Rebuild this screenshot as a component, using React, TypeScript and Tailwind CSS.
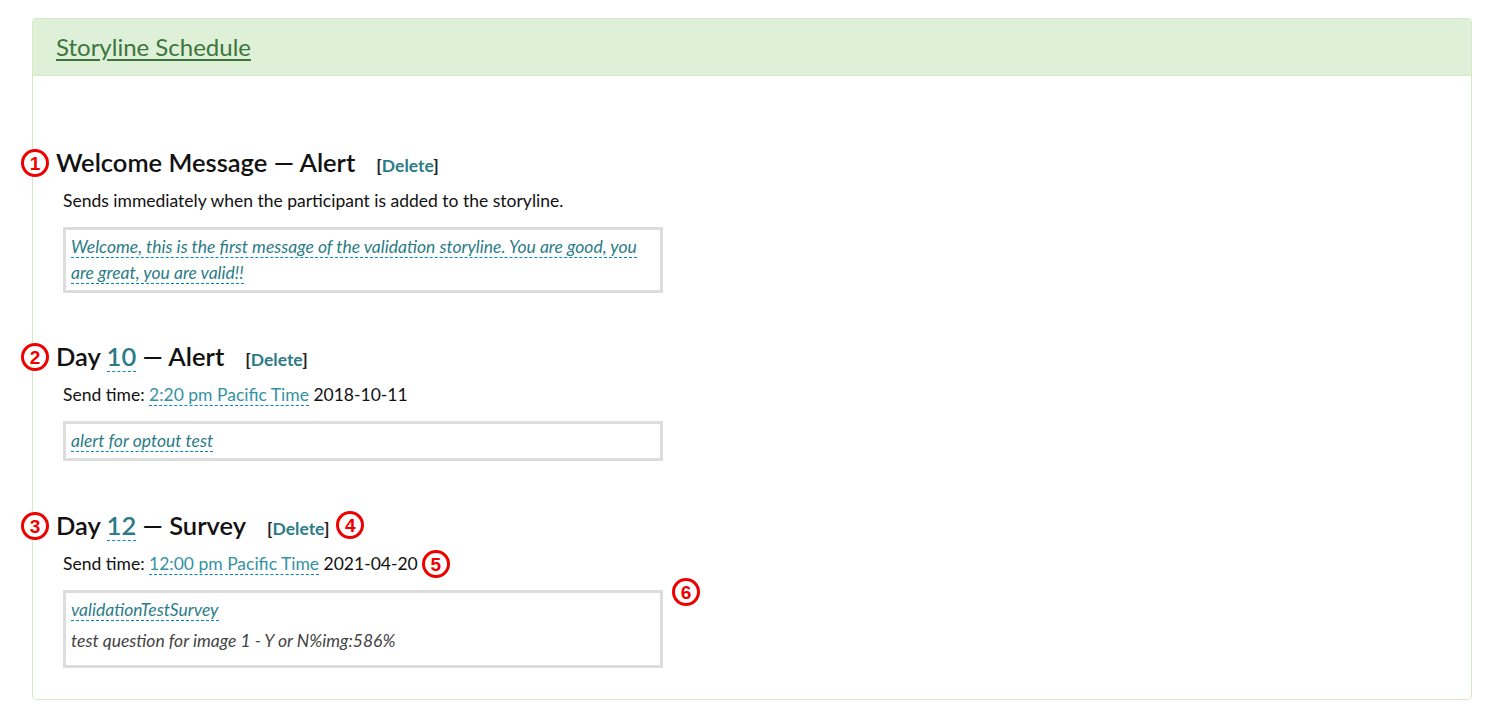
import React from 'react';

const teal = 'text-[#2c7c87]';

function Marker({ n, className = '' }: { n: number; className?: string }) {
  return (
    <span
      className={`inline-flex items-center justify-center w-[28px] h-[28px] rounded-full border-[3px] border-[#ee0000] bg-white text-[#ee0000] text-[19px] font-bold leading-none ${className}`}
      style={{ fontFamily: '"Liberation Sans", Arial, sans-serif' }}
    >
      {n}
    </span>
  );
}

function DeleteLink() {
  return (
    <span className="ml-[21px] text-[17.5px] font-bold text-[#222]">
      [<span className={teal}>Delete</span>]
    </span>
  );
}

function Editable({ children, className = '' }: { children: React.ReactNode; className?: string }) {
  return <span className={`border-b border-dashed border-[#0088cc] ${className}`}>{children}</span>;
}

function Heading({ n, children, after }: { n: number; children: React.ReactNode; after?: React.ReactNode }) {
  return (
    <div className="relative flex items-baseline h-[30px] leading-[30px]">
      <Marker n={n} className="absolute left-[-35px] top-[2px]" />
      <h4 className="text-[25.5px] font-semibold text-[#111]">{children}</h4>
      <DeleteLink />
      {after}
    </div>
  );
}

function MessageBox({ children, marker }: { children: React.ReactNode; marker?: boolean }) {
  return (
    <div className="relative ml-[7px] mt-[15px] w-[600px] border-[3px] border-[#dddddd] px-[5px] py-[4px] text-[17.5px] leading-[26px] italic">
      {children}
      {marker && <Marker n={6} className="absolute left-[606px] top-[-15px] not-italic" />}
    </div>
  );
}

export default function App() {
  return (
    <div className="min-h-screen bg-white pt-[18px] pb-[19px]" style={{ fontFamily: 'Lato, "Liberation Sans", sans-serif' }}>
      <div className="ml-[32px] w-[1440px] rounded-[4px] border border-[#d6e9c6] bg-white">
        <div className="flex h-[57px] items-center rounded-t-[3px] border-b border-[#d6e9c6] bg-[#dff0d8] pl-[23px]">
          <a className="text-[24px] text-[#3c763d] underline underline-offset-[3px]">Storyline Schedule</a>
        </div>
        <div className="pl-[23px] pt-[71px] pb-[31px] text-[#111]">
          <Heading n={1}>Welcome Message — Alert</Heading>
          <div className="ml-[7px] mt-[13px] text-[17.5px] leading-[22px]">
            Sends immediately when the participant is added to the storyline.
          </div>
          <MessageBox>
            <Editable className={teal}>
              Welcome, this is the first message of the validation storyline. You are good, you are great, you are valid!!
            </Editable>
          </MessageBox>

          <div className="mt-[48px]">
            <Heading n={2}>
              Day <Editable className={teal}>10</Editable> — Alert
            </Heading>
            <div className="ml-[7px] mt-[13px] text-[17.5px] leading-[22px]">
              Send time: <Editable className="text-[#3592a2]">2:20 pm Pacific Time</Editable> 2018-10-11
            </div>
            <MessageBox>
              <Editable className={teal}>alert for optout test</Editable>
            </MessageBox>
          </div>

          <div className="mt-[49px]">
            <Heading n={3} after={<Marker n={4} className="ml-[7px] self-center" />}>
              Day <Editable className={teal}>12</Editable> — Survey
            </Heading>
            <div className="ml-[7px] mt-[13px] flex h-[22px] items-center text-[17.5px] leading-[22px]">
              <span>
                Send time: <Editable className="text-[#3592a2]">12:00 pm Pacific Time</Editable> 2021-04-20
              </span>
              <Marker n={5} className="ml-[4px] shrink-0" />
            </div>
            <MessageBox marker>
              <div>
                <Editable className={teal}>validationTestSurvey</Editable>
              </div>
              <div className="mt-[5px] mb-[7px] text-[#444]">test question for image 1 - Y or N%img:586%</div>
            </MessageBox>
          </div>
        </div>
      </div>
    </div>
  );
}
